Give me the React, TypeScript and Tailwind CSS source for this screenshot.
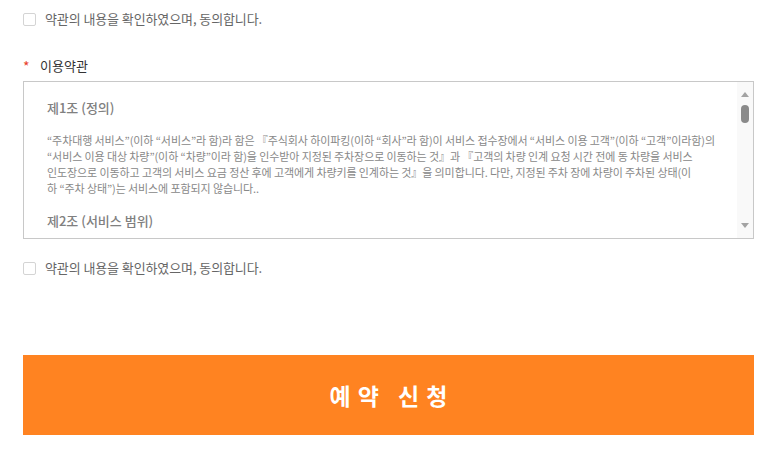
import React from 'react';

const font = { fontFamily: '"Noto Sans CJK KR", "Noto Sans", sans-serif' };

function AgreeRow({ className = '' }: { className?: string }) {
  return (
    <label className={`flex items-center gap-[9px] ${className}`}>
      <span className="w-[13px] h-[13px] border border-[#d4d4d4] rounded-[2px] bg-white" />
      <span className="text-[13px] leading-[20px] text-[#666] tracking-[-0.1px]">약관의 내용을 확인하였으며, 동의합니다.</span>
    </label>
  );
}

function ScrollTrack() {
  return (
    <div className="w-[16px] flex flex-col items-center bg-[#f9f9f9]">
      <svg width="8" height="5" viewBox="0 0 8 5" className="mt-[10px]">
        <path d="M0 5 L4 0 L8 5 Z" fill="#a3a3a3" />
      </svg>
      <div className="mt-[8px] w-[8px] h-[18px] rounded-full bg-[#8a8a8a]" />
      <div className="flex-1" />
      <svg width="8" height="5" viewBox="0 0 8 5" className="mb-[10px]">
        <path d="M0 0 L8 0 L4 5 Z" fill="#a3a3a3" />
      </svg>
    </div>
  );
}

export default function App() {
  return (
    <div className="w-[779px] h-[450px] bg-white pl-[23px] pr-[25px]" style={font}>
      <AgreeRow className="h-[38px]" />

      <div className="mt-[18px] flex items-center h-[20px] text-[13px]">
        <span className="text-[#e8402a] w-[17px] text-[14px]">*</span>
        <span className="text-[#333]">이용약관</span>
      </div>

      <div className="mt-[5px] h-[158px] border border-[#c8c8c8] flex overflow-hidden">
        <div className="flex-1 pl-[23px] pr-[10px] pt-[16px] overflow-hidden">
          <h4 className="text-[13px] leading-[20px] font-medium text-[#808080]">제1조 (정의)</h4>
          <p className="mt-[14px] text-[11px] leading-[16px] text-[#888] whitespace-nowrap tracking-[-0.1px]">
            “주차대행 서비스”(이하 “서비스”라 함)라 함은 『주식회사 하이파킹(이하 “회사”라 함)이 서비스 접수장에서 “서비스 이용 고객”(이하 “고객”이라함)의
            <br />
            “서비스 이용 대상 차량”(이하 “차량”이라 함)을 인수받아 지정된 주차장으로 이동하는 것』과 『고객의 차량 인계 요청 시간 전에 동 차량을 서비스
            <br />
            인도장으로 이동하고 고객의 서비스 요금 정산 후에 고객에게 차량키를 인계하는 것』을 의미합니다. 다만, 지정된 주차 장에 차량이 주차된 상태(이
            <br />
            하 “주차 상태”)는 서비스에 포함되지 않습니다..
          </p>
          <h4 className="mt-[15px] text-[13px] leading-[20px] font-medium text-[#808080]">제2조 (서비스 범위)</h4>
        </div>
        <ScrollTrack />
      </div>

      <AgreeRow className="mt-[19px] h-[20px]" />

      <button className="mt-[77px] w-full h-[80px] bg-[#ff8321] text-white text-[23px] font-bold tracking-[7px] pl-[7px]">
        예약 신청
      </button>
    </div>
  );
}
